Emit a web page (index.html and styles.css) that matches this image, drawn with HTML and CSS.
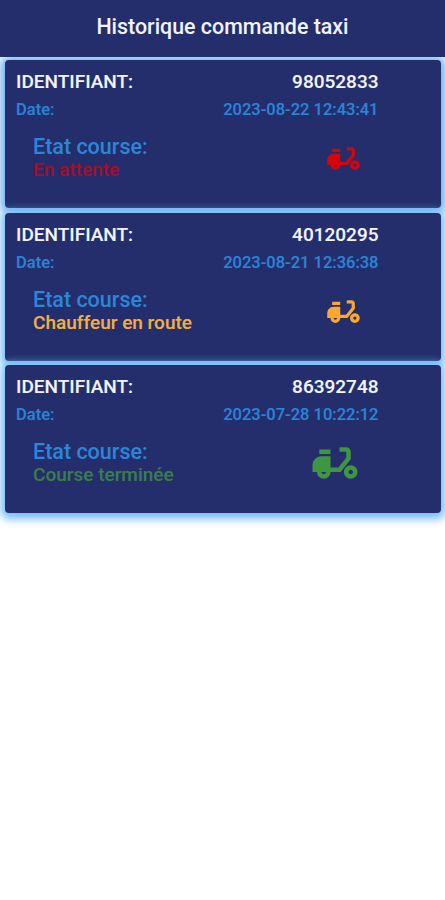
FILE: index.html
```html
<!DOCTYPE html>
<html lang="fr">
<head>
<meta charset="utf-8">
<title>Historique commande taxi</title>
<link rel="stylesheet" href="styles.css">
</head>
<body>
<svg class="defs" width="0" height="0" aria-hidden="true">
  <symbol id="scooter" viewBox="0 0 24 24">
    <path fill-rule="evenodd" d="M19 7c0-1.100-.9-2-2-2h-3v2h3v2.650L13.520 14H10V9H6c-2.210 0-4 1.790-4 4v3h2c0 1.660 1.340 3 3 3s3-1.340 3-3h4.480L19 10.350V7zM7 17c-.55 0-1-.45-1-1h2c0 .55-.45 1-1 1z"/>
    <path d="M5 6h5v2H5z"/>
    <path fill-rule="evenodd" d="M19 13c-1.660 0-3 1.340-3 3s1.340 3 3 3 3-1.340 3-3-1.340-3-3-3zm0 4c-.55 0-1-.45-1-1s.45-1 1-1 1 .45 1 1-.45 1-1 1z"/>
  </symbol>
</svg>
<header class="bar"><h1>Historique commande taxi</h1></header>
<main class="list">
  <article class="card waiting">
    <div class="row ident"><span>IDENTIFIANT:</span><span>98052833</span></div>
    <div class="row date"><span>Date:</span><span class="stamp">2023-08-22 12:43:41</span></div>
    <div class="state">
      <div><p class="label">Etat course:</p><p class="status">En attente</p></div>
      <svg class="icon"><use href="#scooter"/></svg>
    </div>
  </article>
  <article class="card enroute">
    <div class="row ident"><span>IDENTIFIANT:</span><span>40120295</span></div>
    <div class="row date"><span>Date:</span><span class="stamp">2023-08-21 12:36:38</span></div>
    <div class="state">
      <div><p class="label">Etat course:</p><p class="status">Chauffeur en route</p></div>
      <svg class="icon"><use href="#scooter"/></svg>
    </div>
  </article>
  <article class="card done">
    <div class="row ident"><span>IDENTIFIANT:</span><span>86392748</span></div>
    <div class="row date"><span>Date:</span><span class="stamp">2023-07-28 10:22:12</span></div>
    <div class="state">
      <div><p class="label">Etat course:</p><p class="status">Course terminée</p></div>
      <svg class="icon"><use href="#scooter"/></svg>
    </div>
  </article>
</main>
</body>
</html>
```
FILE: styles.css
```css
* { box-sizing: border-box; }
body { margin: 0; min-height: 900px; background: #fff; font-family: Roboto, "Liberation Sans", sans-serif; font-weight: 500; }
h1, p { margin: 0; }
.defs { display: block; }
.bar { position: relative; z-index: 1; height: 56.5px; display: flex; align-items: center; justify-content: center; background: #242e6c; color: #f1f4ff; }
.bar h1 { font-size: 21.4px; font-weight: 500; line-height: 28px; margin-top: -3px; }
.list { display: flex; flex-direction: column; gap: 4.8px; padding: 3.7px 4.5px 0 5px; }
.card { height: 147.8px; padding: 10px 62px 0 11px; border-radius: 4px; background: #242e6c; box-shadow: 0 2px 9px 4px #74bcf8; }
.waiting { box-shadow: 0 1px 9px 5px #74b4f0; }
.row { display: flex; justify-content: space-between; white-space: nowrap; }
.ident { font-size: 19px; line-height: 24px; color: #f3f5ff; -webkit-text-stroke: .1px; }
.date { font-size: 16.5px; line-height: 22px; margin-top: 5px; color: #2b84d5; -webkit-text-stroke: .15px; }
.state { display: flex; justify-content: space-between; align-items: flex-start; padding: 14px 0 0 17px; }
.label { font-size: 21.5px; line-height: 24px; color: #2c86d8; }
.status { font-size: 19px; line-height: 22px; -webkit-text-stroke: .1px; }
.icon { width: 39px; height: 39px; margin: 4px 15.6px 0 0; fill: currentColor; flex: none; }
.waiting .status { color: #a50d29; }
.waiting .icon { color: #d50509; }
.enroute .status { color: #f0b044; }
.enroute .icon { color: #fba82c; }
.done .status { color: #3a7d4a; }
.done .icon { width: 54px; height: 54px; margin: -4px 16.6px 0 0; color: #3f9641; }
```
